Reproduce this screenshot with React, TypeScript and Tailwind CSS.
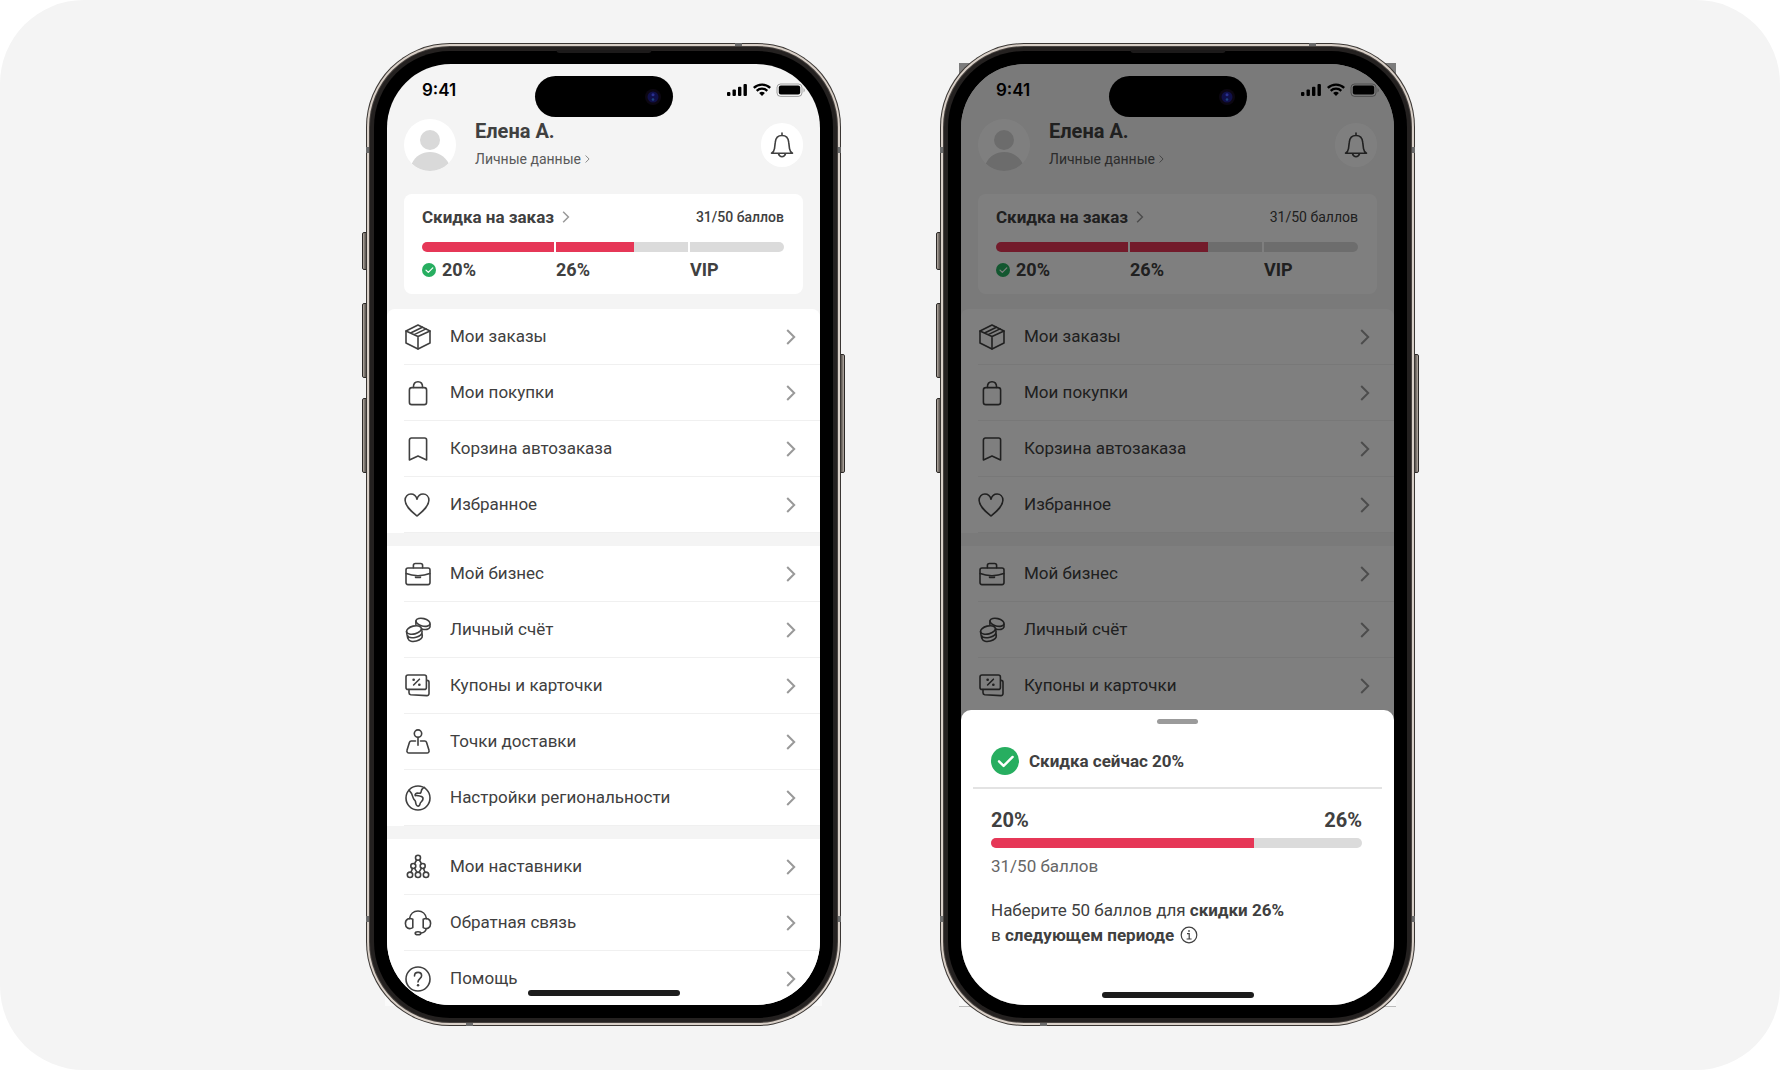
import type { ReactNode } from 'react';

type IconName = 'box' | 'bag' | 'bookmark' | 'heart' | 'case' | 'coins' | 'coupon' | 'point' | 'globe' | 'team' | 'headset' | 'help';

const icons: Record<IconName, ReactNode> = {
    box: (
        <>
            <path d="M13 1 25 7v12l-12 6L1 19V7z" />
            <path d="m1 7 12 5.500L25 7M13 12.500V25M5.600 9 17.400 3.200M9.200 10.600 21 4.900" />
        </>
    ),
    bag: (
        <>
            <rect x="4.4" y="7.6" width="17.2" height="17" rx="2.4" />
            <path d="M8.400 7.400c0-3.400 1.600-5.600 4.600-5.600s4.600 2.200 4.600 5.600" />
        </>
    ),
    bookmark: <path d="M4.400 24V4a2 2 0 0 1 2-2h13.200a2 2 0 0 1 2 2v20L13 20z" />,
    heart: <path d="M12 24C6.700 19.500.1 14.500.1 8.300.1 4.400 2.700 2 5.900 2c2.900 0 5.200 1.800 6.100 5.200C12.900 3.800 15.200 2 18.100 2c3.200 0 5.800 2.400 5.800 6.300 0 6.200-6.600 11.200-11.900 15.700z" />,
    case: (
        <>
            <rect x="1" y="7" width="24" height="16.600" rx="2" />
            <path d="M8.400 6.800V4.500a2 2 0 0 1 2-2h5.200a2 2 0 0 1 2 2v2.300M1.200 12.600C8 15.400 18 15.400 24.800 12.600M10.600 14.800v1.700h4.800v-1.700" />
        </>
    ),
    coins: (
        <>
            <ellipse cx="18" cy="5.300" rx="7.200" ry="3.800" transform="rotate(14 18 5.300)" />
            <path d="M25 7v3c-.8 2.500-4.300 3.200-8.200 1.900M10.900 4v3.400" />
            <ellipse cx="9" cy="13" rx="7.600" ry="4" transform="rotate(-14 9 13)" />
            <path d="m1.500 14.600.6 3.400c1 2.800 5.200 3.100 9 2.200 3.600-.9 6.100-2.900 6-5.400l-.6-3.100M2.100 18l.7 3.300c1 3 5 3.600 8.600 2.700 3.400-.9 6-2.700 5.900-5.200l-.4-3.400" />
        </>
    ),
    coupon: (
        <>
            <rect x="1" y="2" width="20.400" height="14.400" rx="2" />
            <path d="M4 16.600v3.200a2 2 0 0 0 1.800 2l16 .8a2 2 0 0 0 2.200-2V9.400a2 2 0 0 0-2-2M14.400 6.200 8.600 12" />
            <path d="M8.600 6.700h.1M14.300 11.700h.1" strokeWidth="2.600" />
        </>
    ),
    point: (
        <>
            <circle cx="13" cy="4.600" r="3.700" />
            <path d="M13 8.300v8M10.500 12H6.300a2 2 0 0 0-1.900 1.400L2 21.300A2 2 0 0 0 3.900 24h18.200a2 2 0 0 0 1.900-2.700l-2.400-7.900a2 2 0 0 0-1.900-1.400h-4.200" />
        </>
    ),
    globe: (
        <>
            <circle cx="13" cy="13" r="12" />
            <path d="M4 5.200c2.300 2.100 3.400 4.800 4.200 7.700.5 2 1.700 1.800 2.200 3.400.5 1.700.3 3.800 1.800 4.600 1.700.8 2.600-.7 2.900-2.300.3-1.800 2.700-2.200 2.900-4.700.2-2-1.500-2.700-3.200-2.900-2-.3-2.700-.6-4.600-.4-.6-1.700.8-2.400 2.400-2.500 1.500 0 2.400.9 3.300-.6.6-1.200 0-2 1.400-3.600.7-.9 1.200-1 2.200-1.500" />
        </>
    ),
    team: (
        <>
            <circle cx="13" cy="3.800" r="2.500" />
            <circle cx="8.300" cy="12" r="2.500" />
            <circle cx="17.700" cy="12" r="2.500" />
            <circle cx="5" cy="20.800" r="2.700" />
            <circle cx="13" cy="20.800" r="2.700" />
            <circle cx="21" cy="20.800" r="2.700" />
            <path d="m11.600 6-2 3.700M14.400 6l2 3.700M7.500 14.400 6 18.200M9.500 14.200l2.400 4M16.500 14.200l-2.400 4M18.500 14.400l1.500 3.800" />
        </>
    ),
    headset: (
        <>
            <path d="M4.500 8.800C5.200 4 8.700 1 13 1s7.800 3 8.500 7.800" />
            <path d="M7.800 17.600C3.800 20 .4 17.600.4 13.600.4 9 4.200 7.400 7.800 9.200zM18.200 17.600c4 2.400 7.400 0 7.400-4 0-4.600-3.800-6.200-7.400-4.400zM21.300 18.700c-.6 2.800-2.500 4.200-5.400 4.300" />
            <ellipse cx="13" cy="23.300" rx="2.800" ry="1.500" />
        </>
    ),
    help: (
        <>
            <circle cx="13" cy="13" r="12" />
            <path d="M9.500 10c0-2.300 1.500-3.600 3.600-3.600s3.500 1.400 3.500 3.300c0 3-3.600 2.900-3.600 6.300" />
            <path d="M13 19.300h.1" strokeWidth="2.400" />
        </>
    ),
};

const groups: { icon: IconName; label: string }[][] = [
    [
        { icon: 'box', label: 'Мои заказы' },
        { icon: 'bag', label: 'Мои покупки' },
        { icon: 'bookmark', label: 'Корзина автозаказа' },
        { icon: 'heart', label: 'Избранное' },
    ],
    [
        { icon: 'case', label: 'Мой бизнес' },
        { icon: 'coins', label: 'Личный счёт' },
        { icon: 'coupon', label: 'Купоны и карточки' },
        { icon: 'point', label: 'Точки доставки' },
        { icon: 'globe', label: 'Настройки региональности' },
    ],
    [
        { icon: 'team', label: 'Мои наставники' },
        { icon: 'headset', label: 'Обратная связь' },
        { icon: 'help', label: 'Помощь' },
    ],
];

// rows that stay visible above the open sheet
const groupsAboveSheet = [groups[0], groups[1].slice(0, 3)];

function Chevron({ className }: { className: string }) {
    return (
        <svg viewBox="0 0 10 16" fill="none" stroke="currentColor" strokeWidth="2" className={className}>
            <path d="m1.200 1 7 7-7 7" />
        </svg>
    );
}

function CheckCircle({ className }: { className: string }) {
    return (
        <svg viewBox="0 0 28 28" fill="none" className={className}>
            <circle cx="14" cy="14" r="14" fill="currentColor" />
            <path d="m8 14.300 4.600 4.600 9-9" stroke="white" strokeWidth="2.400" strokeLinecap="round" strokeLinejoin="round" />
        </svg>
    );
}

function StatusBar() {
    return (
        <div className="flex h-[55px] items-start justify-between pt-4 pr-[15px] pl-[35px] text-black">
            <span className="font-['Inter',sans-serif] text-[17px] leading-5 font-semibold">9:41</span>
            <span className="flex h-5 items-center">
                <svg viewBox="0 0 78 14" className="h-[14px] w-[78px]">
                    <rect x="0" y="9" width="3.400" height="4" rx="1" />
                    <rect x="5.500" y="6.500" width="3.400" height="6.500" rx="1" />
                    <rect x="11" y="3.800" width="3.400" height="9.200" rx="1" />
                    <rect x="16.500" y="1" width="3.400" height="12" rx="1" />
                    <path d="m35 13-2.900-3a4.300 4.300 0 0 1 5.800 0z" />
                    <path d="M29.700 7.800a7.700 7.700 0 0 1 10.600 0M26.800 4.900a11.800 11.800 0 0 1 16.400 0" fill="none" stroke="black" strokeWidth="2.300" />
                    <rect x="50" y="1" width="25" height="12.400" rx="3.600" fill="none" stroke="black" strokeOpacity="0.35" />
                    <rect x="51.800" y="2.600" width="21.400" height="9" rx="2" />
                    <path d="M76.600 5v4.400c1.400-.8 1.400-3.600 0-4.400" opacity="0.400" />
                </svg>
            </span>
        </div>
    );
}

function ProfileHeader() {
    return (
        <header className="flex px-[17px]">
            <svg viewBox="0 0 52 52" className="size-[52px] rounded-full bg-white" fill="#d9d9d9">
                <circle cx="26" cy="21" r="10" />
                <path d="M7.700 44.700C11.500 37 18 33 26 33s14.500 4 18.800 11.500A26 26 0 0 1 7.700 44.700" />
            </svg>
            <div className="ml-[19px] flex-1">
                <h1 className="text-[20px] leading-6 font-bold text-[#404040]">Елена А.</h1>
                <a href="#profile" className="mt-[6px] flex items-center text-sm leading-5 text-[#595959]">
                    Личные данные
                    <Chevron className="ml-1 h-2 w-[5px] text-[#888]" />
                </a>
            </div>
            <button aria-label="Уведомления" className="mt-1 flex h-11 w-[42px] items-center justify-center rounded-full bg-white text-[#404040]">
                <svg viewBox="0 0 24 26" fill="none" stroke="currentColor" strokeWidth="1.600" strokeLinecap="round" strokeLinejoin="round" className="h-[26px] w-6">
                    <path d="M12 1v2.500M1.500 21.200h21c-2-1.200-2.700-2.500-3-4.600l-.8-6.400C18.300 6 15.800 3.500 12 3.500S5.700 6 5.300 10.200l-.8 6.400c-.3 2.100-1 3.400-3 4.600zM8.400 21.500c.6 1.900 1.900 3.200 3.600 3.200s3-1.300 3.600-3.200" />
                </svg>
            </button>
        </header>
    );
}

function DiscountCard({ dimmed }: { dimmed: boolean }) {
    return (
        <section className="mx-[17px] mt-[23px] h-[100px] rounded-lg bg-white pt-[11px] pr-[19px] pl-[18px] text-[#404040]">
            <div className="flex items-center justify-between leading-6">
                <a href="#discount" className="flex items-center text-[17px] font-bold">
                    Скидка на заказ
                    <Chevron className="ml-2 h-3 w-2 text-[#999]" />
                </a>
                <span className={dimmed ? 'text-sm leading-6' : 'text-sm leading-6 font-medium'}>31/50 баллов</span>
            </div>
            <div className="mt-[13px] flex h-[10px] gap-[2px] overflow-hidden rounded-full">
                <div className="w-[132px] bg-[#e63757]" />
                <div className="w-[132px] bg-[#dbdbdb]">
                    <div className="h-full w-[59%] bg-[#e63757]" />
                </div>
                <div className="flex-1 bg-[#dbdbdb]" />
            </div>
            <div className="mt-1 flex gap-[2px] text-[18px] leading-7 font-bold">
                <span className="flex w-[132px] items-center">
                    <CheckCircle className="mr-[6px] size-[14px] text-[#27ae60]" />
                    20%
                </span>
                <span className="w-[132px]">26%</span>
                <span>VIP</span>
            </div>
        </section>
    );
}

function Menu({ items }: { items: typeof groups }) {
    return (
        <nav className="mt-[15px] flex flex-col gap-[13px]">
            {items.map((group, i) => (
                <ul key={i} className="bg-white first:rounded-t-lg">
                    {group.map(item => (
                        <li key={item.label} className="pl-[17px]">
                            <a href="#menu" className="flex h-14 items-center border-b border-[#f0f0f0] pr-6 text-[17px] text-[#404040]">
                                <svg viewBox="0 0 26 26" fill="none" stroke="currentColor" strokeWidth="1.600" strokeLinecap="round" strokeLinejoin="round" className="mr-[19px] ml-px size-[26px] overflow-visible">
                                    {icons[item.icon]}
                                </svg>
                                <span className="flex-1">{item.label}</span>
                                <Chevron className="h-4 w-[10px] text-[#999]" />
                            </a>
                        </li>
                    ))}
                </ul>
            ))}
        </nav>
    );
}

function DiscountSheet() {
    return (
        <section className="absolute inset-x-0 bottom-0 h-[295px] rounded-t-[10px] bg-white text-[#404040]">
            <div className="mx-auto mt-[9px] h-[5px] w-[41px] rounded-full bg-[#9b9b9b]" />
            <div className="mx-3 mt-[23px] flex items-center border-b-2 border-[#e3e3e3] px-[18px] pb-3">
                <CheckCircle className="size-7 text-[#27ae60]" />
                <h2 className="ml-[10px] text-[17px] leading-7 font-bold">Скидка сейчас 20%</h2>
            </div>
            <div className="pr-8 pl-[30px]">
                <div className="mt-[19px] flex justify-between text-[20px] leading-6 font-bold">
                    <span>20%</span>
                    <span>26%</span>
                </div>
                <div className="mt-[6px] h-[10px] overflow-hidden rounded-full bg-[#dbdbdb]">
                    <div className="h-full w-[71%] bg-[#e63757]" />
                </div>
                <p className="mt-[6px] text-[17px] leading-6 text-[#666]">31/50 баллов</p>
                <p className="mt-5 text-[17px] leading-[25px]">
                    Наберите 50 баллов для <b>скидки 26%</b>
                    <br />
                    в <b>следующем периоде</b>
                    <svg viewBox="0 0 18 18" fill="none" stroke="currentColor" strokeWidth="1.200" className="ml-[6px] inline-block size-[18px] align-[-3px]">
                        <circle cx="9" cy="9" r="7.800" />
                        <path d="M7 7.700h2.200v5.200M6.600 13h5" />
                        <path d="M8.200 5h1.600" strokeWidth="1.600" />
                    </svg>
                </p>
            </div>
        </section>
    );
}

const sideButton = 'absolute w-[6px] rounded-[2px] border border-[#2c2927] bg-linear-to-r from-[#b9b0a8] via-[#6e6862] to-[#45413e]';
const band = 'absolute bg-[#6b6b6b]';

function Phone({ dimmed = false }: { dimmed?: boolean }) {
    return (
        <div className="relative w-[475px] shrink-0">
            <div className={dimmed ? 'absolute inset-x-[19px] top-5 bottom-[19px] border-b border-[#bbb] bg-[linear-gradient(#7c7c7c_50%,#f8f8f8_50%)]' : 'absolute inset-x-[19px] top-1/2 bottom-5 bg-[#fafafa]'} />
            <div className={`${sideButton} top-[189px] -left-1 h-[38px]`} />
            <div className={`${sideButton} top-[260px] -left-1 h-[75px]`} />
            <div className={`${sideButton} top-[355px] -left-1 h-[75px]`} />
            <div className={`${sideButton} top-[311px] -right-1 h-[119px] rotate-180`} />
            <div className="relative rounded-[84px] bg-[#3a3633] p-px">
                <div className="rounded-[83px] bg-[#d8cfc7] p-[2px]">
                    <div className="rounded-[81px] bg-[#47423f] p-px">
                        <div className="rounded-[80px] bg-[#242120] p-1">
                            <div className="rounded-[76px] bg-black p-[13px]">
                                <div className="relative h-[941px] overflow-hidden rounded-[64px] bg-[#f4f4f4]">
                                    <StatusBar />
                                    <ProfileHeader />
                                    <DiscountCard dimmed={dimmed} />
                                    <Menu items={dimmed ? groupsAboveSheet : groups} />
                                    {dimmed && (
                                        <>
                                            <div className="absolute inset-0 bg-black/50" />
                                            <DiscountSheet />
                                        </>
                                    )}
                                    <div className="absolute top-3 left-1/2 flex h-[41px] w-[138px] -translate-x-1/2 items-center justify-end rounded-full bg-black pr-3">
                                        <svg viewBox="0 0 16 16" className="size-4">
                                            <circle cx="8" cy="8" r="8" fill="#0c0712" />
                                            <circle cx="8" cy="8" r="5.500" fill="#10104a" />
                                            <circle cx="8" cy="5.800" r="1.500" fill="#2a3090" />
                                            <circle cx="8" cy="10.500" r="1.300" fill="#1e4480" />
                                        </svg>
                                    </div>
                                    <div className={`absolute left-1/2 h-[6px] w-[152px] -translate-x-1/2 rounded-full bg-[#1c1c1c] ${dimmed ? 'bottom-[7px]' : 'bottom-[9px]'}`} />
                                </div>
                            </div>
                        </div>
                    </div>
                </div>
                <div className="absolute top-[7px] left-1/2 h-[3px] w-[95px] -translate-x-1/2 rounded-b-sm bg-[#1c1a1a]" />
                <div className={`${band} top-0 right-[99px] h-[3px] w-[7px]`} />
                <div className={`${band} bottom-0 left-[100px] h-[3px] w-[7px]`} />
                <div className={`${band} top-[104px] left-0 h-[6px] w-[3px]`} />
                <div className={`${band} top-[104px] right-0 h-[6px] w-[3px]`} />
                <div className={`${band} bottom-[104px] left-0 h-[6px] w-[3px]`} />
                <div className={`${band} right-0 bottom-[104px] h-[6px] w-[3px]`} />
            </div>
        </div>
    );
}

export default function App() {
    return (
        <div className="min-h-screen bg-white">
            <main className="flex min-h-screen items-center justify-center gap-[99px] rounded-[84px] bg-[#f4f4f4] pb-px pl-px font-['Roboto',sans-serif]">
                <Phone />
                <Phone dimmed />
            </main>
        </div>
    );
}
